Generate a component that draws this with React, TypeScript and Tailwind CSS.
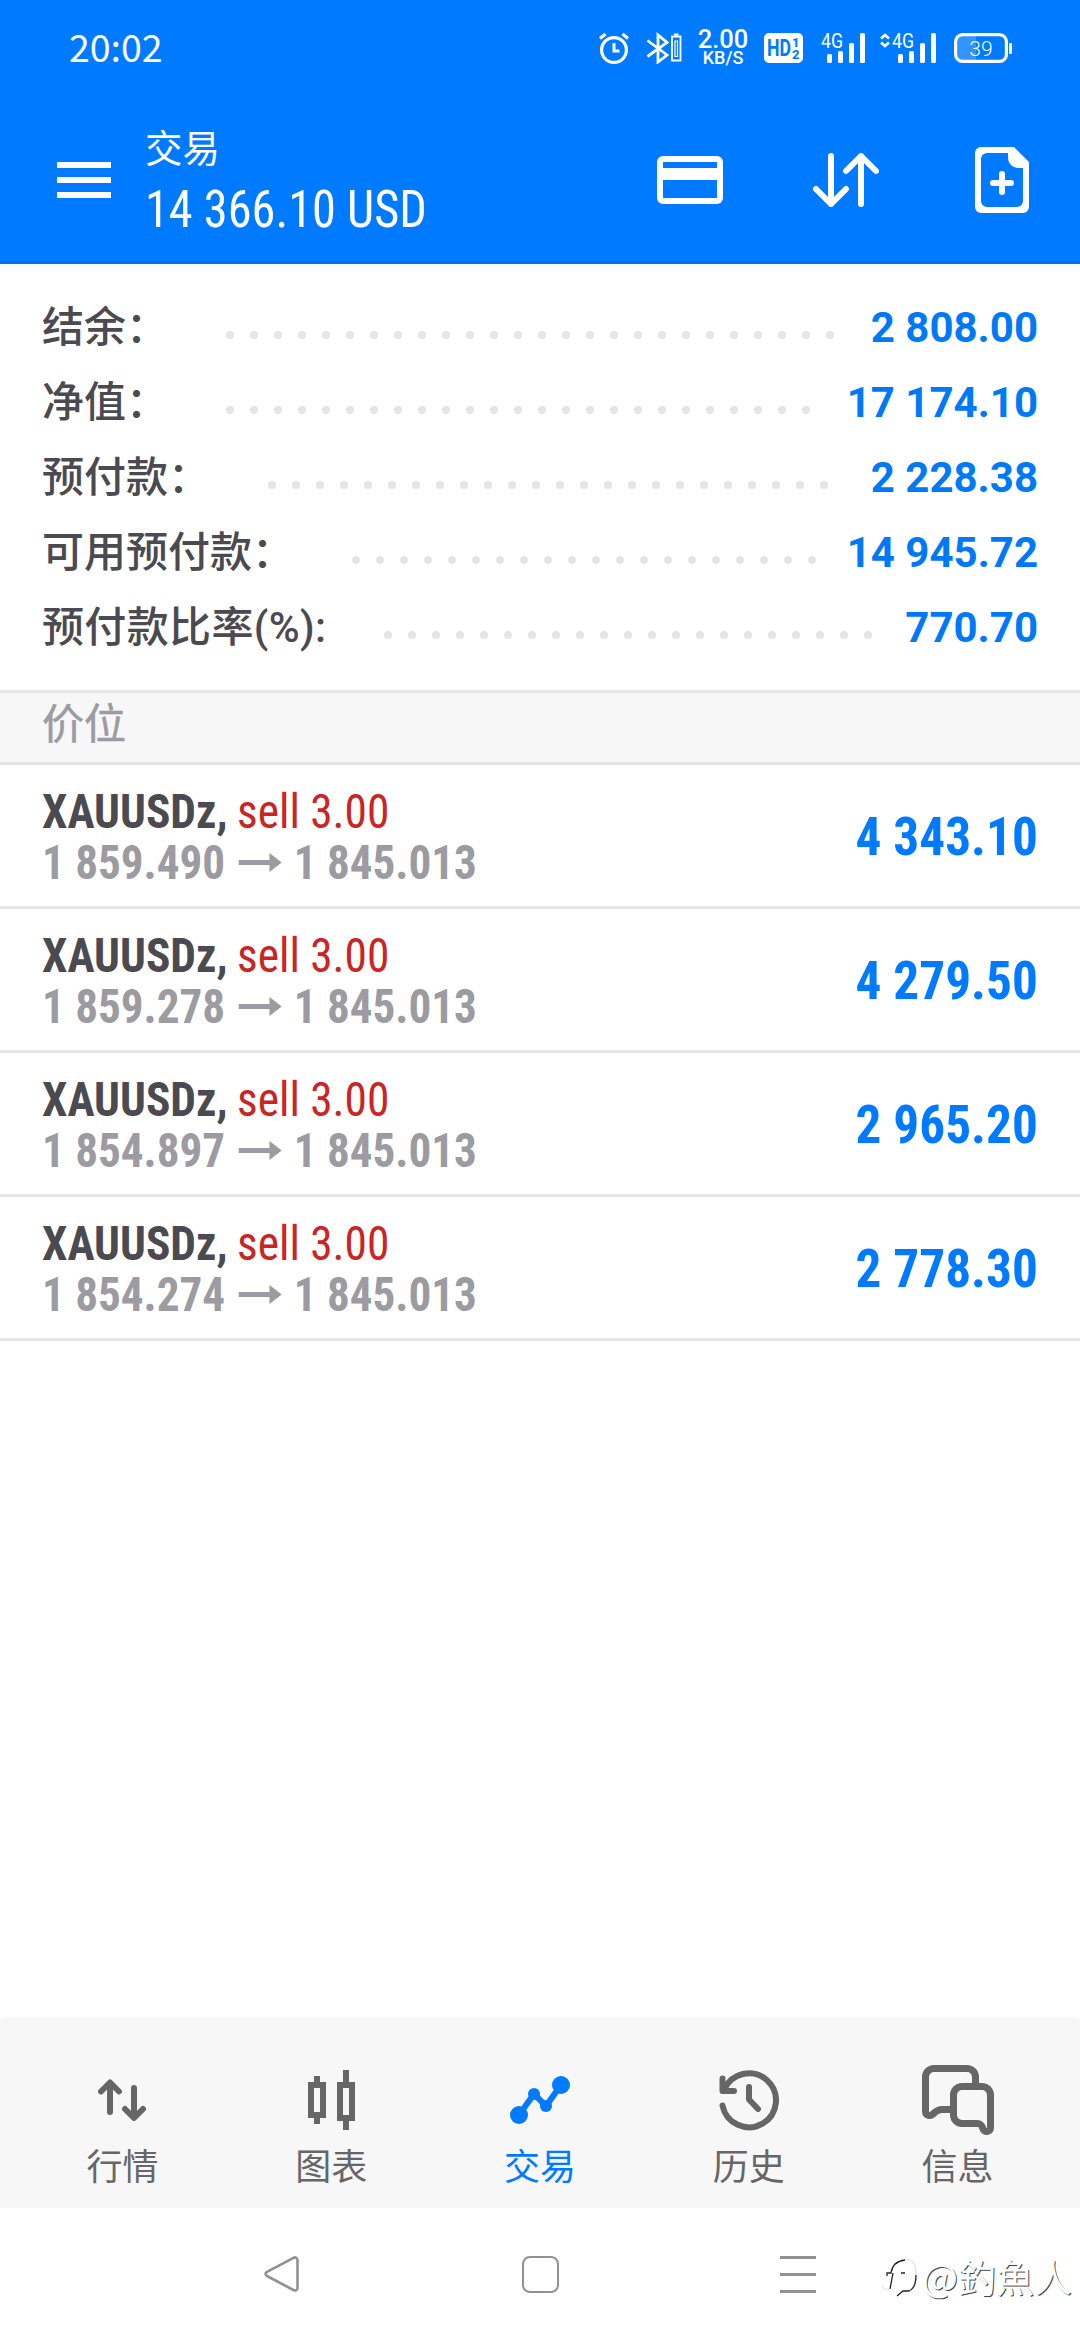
import type { ReactNode } from "react";

const summary = [
    { label: "结余：", value: "2 808.00", dots: 26 },
    { label: "净值：", value: "17 174.10", dots: 25 },
    { label: "预付款：", value: "2 228.38", dots: 24 },
    { label: "可用预付款：", value: "14 945.72", dots: 20 },
    { label: "预付款比率(%):", value: "770.70", dots: 21, className: "tracking-[0.35px]" },
];

const positions = [
    { open: "1 859.490", current: "1 845.013", profit: "4 343.10" },
    { open: "1 859.278", current: "1 845.013", profit: "4 279.50" },
    { open: "1 854.897", current: "1 845.013", profit: "2 965.20" },
    { open: "1 854.274", current: "1 845.013", profit: "2 778.30" },
];

function SignalBars() {
    return (
        <g fill="currentColor">
            <rect x="6" y="21" width="5" height="9" rx="1.5" />
            <rect x="17" y="18" width="5" height="12" rx="1.5" />
            <rect x="28" y="10" width="5" height="20" rx="1.5" />
            <rect x="39" y="0" width="5" height="30" rx="1.5" />
        </g>
    );
}

function NetworkLabel() {
    return (
        <text x="0" y="14.5" fontSize="20" fontWeight="450" fill="currentColor" textLength="22" lengthAdjust="spacingAndGlyphs">
            4G
        </text>
    );
}

function StatusBar() {
    return (
        <div className="flex h-24 items-center pr-[68px] pl-[69px] font-[Roboto,sans-serif]">
            <span className="mr-auto pb-[5px] font-['Noto_Sans_CJK_SC',sans-serif] text-[37.5px] leading-none">20:02</span>

            <svg className="mr-[17px]" width="30" height="32" viewBox="0 0 30 32" fill="none" stroke="currentColor">
                <circle cx="15" cy="18" r="12.4" strokeWidth="3.2" />
                <path d="M15 11v8h5.5" strokeWidth="3" />
                <path d="M1 6.5 6.5 2M29 6.5 23.5 2" strokeWidth="3.2" />
            </svg>

            <svg className="mr-[15px]" width="36" height="32" viewBox="0 0 36 32" fill="none" stroke="currentColor">
                <path d="M1.5 8.5 21 23 12 30V3l9 7.5L1.5 24.5" strokeWidth="2.8" />
                <path d="M26 4.5h8.5v24H26z" strokeWidth="1.8" />
                <path d="M28 2.5h4.5" strokeWidth="2" />
                <path d="M29 9h2.5v15.5H29z" strokeWidth="1.2" />
            </svg>

            <div className="mr-[15px] flex w-[52px] flex-col items-center font-medium">
                <span className="text-[25.5px] leading-[20px]">2.00</span>
                <span className="text-[18px] leading-[18px]">KB/S</span>
            </div>

            <svg className="mr-[17px] overflow-visible" width="40" height="30" viewBox="0 0 40 30">
                <rect width="39" height="30" rx="5" fill="#fff" />
                <text x="3" y="23" fontSize="23" fontWeight="700" fill="#007aff" textLength="24" lengthAdjust="spacingAndGlyphs">
                    HD
                </text>
                <text x="28" y="13.5" fontSize="13" fontWeight="800" fill="#007aff">
                    1
                </text>
                <text x="28" y="25.5" fontSize="13" fontWeight="800" fill="#007aff">
                    2
                </text>
            </svg>

            <svg className="mr-[14px] overflow-visible" width="45" height="30" viewBox="0 0 45 30">
                <NetworkLabel />
                <SignalBars />
            </svg>

            <svg className="mr-[17px] overflow-visible" width="57" height="30" viewBox="0 0 57 30">
                <path d="M1 5.5 5 2l4 3.5M1 9.5 5 13l4-3.5" fill="none" stroke="currentColor" strokeWidth="2.6" />
                <g transform="translate(12 0)">
                    <NetworkLabel />
                    <SignalBars />
                </g>
            </svg>

            <svg className="overflow-visible" width="58" height="30" viewBox="0 0 58 30">
                <path d="M8 2h14v26H8a6 6 0 0 1-6-6V8a6 6 0 0 1 6-6z" fill="#fff" fillOpacity="0.2" />
                <rect x="1.6" y="1.6" width="50.8" height="26.8" rx="7" fill="none" stroke="currentColor" strokeWidth="3.2" />
                <rect x="55" y="10" width="3" height="11" rx="1" fill="currentColor" />
                <text x="27" y="22.5" fontSize="21" fontWeight="300" fill="currentColor" textAnchor="middle">
                    39
                </text>
            </svg>
        </div>
    );
}

function Header() {
    return (
        <header className="border-b-[3px] border-[#0d6fdb] bg-[#007aff] text-white">
            <StatusBar />
            <div className="flex h-[165px] items-center pt-[3px] pr-[51px] pl-[57px]">
                <svg width="54" height="36" viewBox="0 0 54 36" fill="currentColor">
                    <path d="M0 0h54v6H0zM0 15h54v6H0zM0 30h54v6H0z" />
                </svg>
                <div className="ml-[34px] flex flex-col">
                    <h1 className="pb-2 font-['Noto_Sans_CJK_SC',sans-serif] text-[37.5px] leading-[52px]">交易</h1>
                    <span className="origin-left scale-x-[0.93] font-['Roboto_Condensed',sans-serif] text-[52px] leading-[60px] font-[450] whitespace-nowrap">
                        14 366.10 USD
                    </span>
                </div>

                <svg className="ml-auto" width="66" height="48" viewBox="0 0 66 48" fill="none" stroke="currentColor" strokeWidth="6">
                    <rect x="3" y="3" width="60" height="42" rx="3" />
                    <path d="M3 18h60" strokeWidth="12" />
                </svg>
                <svg
                    className="ml-[90px]"
                    width="66"
                    height="54"
                    viewBox="0 0 66 54"
                    fill="none"
                    stroke="currentColor"
                    strokeWidth="6"
                    strokeLinecap="round"
                    strokeLinejoin="round"
                >
                    <path d="M18 3v48M3 36l15 15 15-15M48 51V3M33 18 48 3l15 15" />
                </svg>
                <svg className="ml-24" width="54" height="66" viewBox="0 0 54 66">
                    <path
                        fill="currentColor"
                        fillRule="evenodd"
                        d="M6 0h33l15 15v45a6 6 0 0 1-6 6H6a6 6 0 0 1-6-6V6a6 6 0 0 1 6-6zM12 6a6 6 0 0 0-6 6v42a6 6 0 0 0 6 6h30a6 6 0 0 0 6-6V21h-5a10 10 0 0 1-10-10V6z"
                    />
                    <path d="M27 27v18M18 36h18" stroke="currentColor" strokeWidth="6" strokeLinecap="round" />
                </svg>
            </div>
        </header>
    );
}

function Summary() {
    return (
        <dl className="flex h-[426px] flex-col px-[42px] pt-[26px]">
            {summary.map(({ label, value, dots, className = "" }) => (
                <div key={label} className="flex h-[75px] items-center">
                    <dt
                        className={`font-[Roboto,'Noto_Sans_CJK_SC',sans-serif] text-[42px] leading-none font-medium text-[#4b4a50] ${className}`}
                    >
                        {label}
                    </dt>
                    <dd className="mt-[14px] ml-[58px] flex gap-4">
                        {Array.from({ length: dots }, (_, i) => (
                            <i key={i} className="size-2 rounded-full bg-[#e5e5e5]" />
                        ))}
                    </dd>
                    <dd className="ml-auto font-[Roboto,sans-serif] text-[42px] leading-none font-bold text-[#0079f6]">
                        {value}
                    </dd>
                </div>
            ))}
        </dl>
    );
}

function PositionRow({ open, current, profit }: { open: string; current: string; profit: string }) {
    return (
        <li className="flex h-36 items-center border-b-[3px] border-[#e5e5e5] px-[42px] pt-[2px] font-['Roboto_Condensed',sans-serif]">
            <div className="flex flex-col text-[48px] leading-[51px]">
                <div className="flex origin-left scale-x-[0.945] gap-[10px]">
                    <span className="font-bold text-[#4b4a50]">XAUUSDz,</span>
                    <span className="text-[#cb2424]">sell 3.00</span>
                </div>
                <div className="flex origin-left scale-x-[0.94] items-center font-bold text-[#9b9ba1]">
                    <span>{open}</span>
                    <svg className="mr-[13px] ml-[14px]" width="46" height="19" viewBox="0 0 46 19" fill="currentColor">
                        <path d="M0 7h33V0l13 9.500L33 19v-7H0z" />
                    </svg>
                    <span>{current}</span>
                </div>
            </div>
            <span className="ml-auto origin-right scale-x-[0.95] text-[54px] leading-none font-bold text-[#007aff]">
                {profit}
            </span>
        </li>
    );
}

function NavItem({ label, active, children }: { label: string; active?: boolean; children: ReactNode }) {
    return (
        <a className={`flex flex-1 flex-col items-center ${active ? "text-[#007aff]" : "text-[#666]"}`}>
            <div className="flex h-[72px] items-center">{children}</div>
            <span className="mt-0.5 font-['Noto_Sans_CJK_SC',sans-serif] text-[36px] leading-[52px]">{label}</span>
        </a>
    );
}

function BottomNav() {
    return (
        <nav className="flex h-[189px] bg-[#f7f7f7] px-[18px] pt-[45px] shadow-[0_-2px_4px_rgba(0,0,0,0.03)]">
            <NavItem label="行情">
                <svg
                    width="48"
                    height="42"
                    viewBox="0 0 48 42"
                    fill="none"
                    stroke="currentColor"
                    strokeWidth="6"
                    strokeLinecap="round"
                    strokeLinejoin="round"
                >
                    <path d="M12 33V4M3 12.500 12 3.500l9 9M36 9v29M27 30l9 9 9-9" />
                </svg>
            </NavItem>
            <NavItem label="图表">
                <svg width="48" height="60" viewBox="0 0 48 60" fill="none" stroke="currentColor" strokeWidth="6">
                    <path d="M4 15h12v30H4zM10 6v6M10 48v6M33 15h12v33H33zM39 0v12M39 51v9" />
                </svg>
            </NavItem>
            <NavItem label="交易" active>
                <svg width="60" height="48" viewBox="0 0 60 48" fill="currentColor">
                    <circle cx="9" cy="39" r="9" />
                    <circle cx="24" cy="18" r="6" />
                    <circle cx="36" cy="30" r="6" />
                    <circle cx="51" cy="9" r="9" />
                    <path d="m9 39 15-21 12 12L51 9" fill="none" stroke="currentColor" strokeWidth="6" />
                </svg>
            </NavItem>
            <NavItem label="历史">
                <svg
                    width="60"
                    height="62"
                    viewBox="0 0 60 62"
                    fill="none"
                    stroke="currentColor"
                    strokeWidth="6"
                    strokeLinecap="round"
                    strokeLinejoin="round"
                >
                    <path d="M3.500 36.500A27 27 0 1 0 5 21M3.500 9.500V22H15M30 18v12.500l9 9.500" />
                </svg>
            </NavItem>
            <NavItem label="信息">
                <svg
                    width="72"
                    height="70"
                    viewBox="0 0 72 70"
                    fill="none"
                    stroke="currentColor"
                    strokeWidth="7"
                    strokeLinejoin="round"
                >
                    <path d="M53.500 18.500V12a8.500 8.500 0 0 0-8.500-8.500H12A8.500 8.500 0 0 0 3.500 12v34.500c0 4.500 5 5 7.500 2.500 4-4 6-4.500 9-4.500h11" />
                    <path d="M40 21.500h20a8.500 8.500 0 0 1 8.500 8.500v33c0 4.500-6.500 4.500-7.500 1-1.500-5-3-5.500-6-5.500H40a8.500 8.500 0 0 1-8.500-8.500V30a8.500 8.500 0 0 1 8.500-8.500z" />
                </svg>
            </NavItem>
        </nav>
    );
}

function SystemNav() {
    return (
        <div className="relative flex h-[132px] items-center bg-white pl-[264px] text-[#919191]">
            <svg width="36" height="38" viewBox="0 0 36 38" fill="none" stroke="currentColor" strokeWidth="2.6" strokeLinejoin="round">
                <path d="M29.500 2.800 3 16.800c-2 1-2 3 0 4.200l26.500 14c2 1 4 0 4-2V5c0-2-2-3.200-4-2.200z" />
            </svg>
            <span className="ml-[222px] size-[37px] rounded-[8px] border-[2.6px] border-current" />
            <svg className="ml-[221px]" width="36" height="37" viewBox="0 0 36 37" fill="currentColor">
                <path d="M0 0h36v3H0zM0 17h36v3H0zM0 34h36v3H0z" />
            </svg>

            <div className="absolute right-2 bottom-[36px] flex items-center text-white">
                <svg className="mr-[3px]" width="38" height="46" viewBox="0 0 38 46" fill="none" strokeWidth="1.3" stroke="#222">
                    <path d="M6 23v-3h4c1-7 5-12 14-13M12 20 9 36M20 20h4M16 43l6-5h6c5-2 7-8 7-16" />
                    <path d="M24 7c7-2 11 3 11 15M9 36c-3 1-6 0-8-3" stroke="#ccc" strokeWidth="0.8" />
                </svg>
                <span className="font-['Noto_Sans_CJK_TC',sans-serif] text-[38px] leading-[56px] [text-shadow:1px_1px_0_#444]">
                    @釣魚人
                </span>
            </div>
        </div>
    );
}

export default function App() {
    return (
        <div className="flex h-[2340px] w-[1080px] flex-col overflow-hidden bg-white">
            <Header />
            <Summary />
            <h2 className="h-[75px] border-y-[3px] border-[#e5e5e5] bg-[#f7f7f7] pl-[42px] font-['Noto_Sans_CJK_SC',sans-serif] text-[42px] leading-[55px] text-[#9b9ba1] [-webkit-text-stroke:0.5px]">
                价位
            </h2>
            <ul>
                {positions.map((position) => (
                    <PositionRow key={position.open} {...position} />
                ))}
            </ul>
            <div className="mt-auto">
                <BottomNav />
                <SystemNav />
            </div>
        </div>
    );
}
